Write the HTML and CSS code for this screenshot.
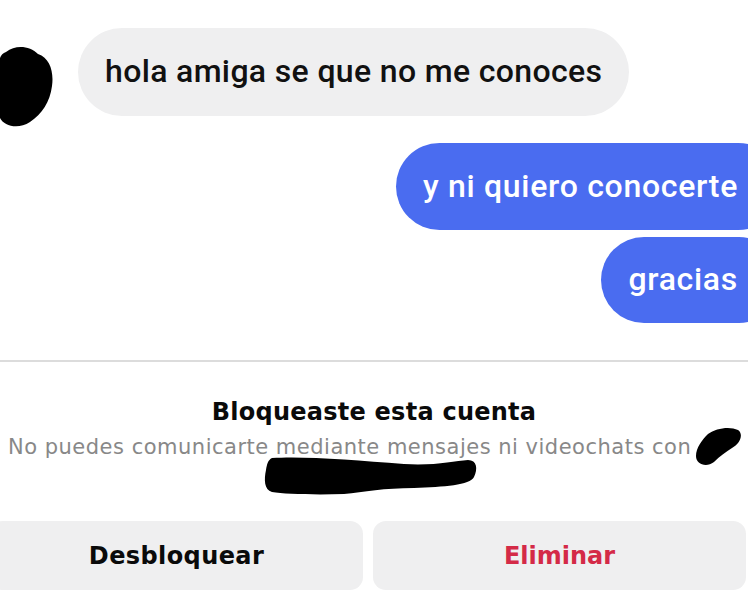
FILE: index.html
```html
<!DOCTYPE html>
<html lang="es">
<head>
<meta charset="utf-8">
<link rel="stylesheet" href="styles.css">
</head>
<body>
<div class="page">
  <div class="chat">
    <div class="row row-in">
      <svg class="blob blob-avatar" width="54" height="84" viewBox="0 0 54 84"><path d="M6 8 C16 0 30 2 38 10 C50 14 54 28 52 42 C50 58 42 70 30 78 C18 86 4 82 0 74 L0 14 C1 11 3 9 6 8 Z" fill="#000"/></svg>
      <div class="bubble bubble-in">hola amiga se que no me conoces</div>
    </div>
    <div class="row row-out">
      <div class="bubble bubble-out">y ni quiero conocerte</div>
    </div>
    <div class="row row-out row-tight">
      <div class="bubble bubble-out">gracias</div>
    </div>
  </div>
  <div class="divider"></div>
  <div class="blocked">
    <div class="blocked-title">Bloqueaste esta cuenta</div>
    <div class="blocked-text">No puedes comunicarte mediante mensajes ni videochats con</div>
    <svg class="blob blob-name" width="48" height="40" viewBox="0 0 48 40"><path d="M14 8 C22 2 36 0 44 4 C50 8 46 18 38 22 C32 26 26 30 20 36 C12 42 2 38 2 30 C2 22 8 14 14 8 Z" fill="#000"/></svg>
    <svg class="blob blob-line" width="214" height="40" viewBox="0 0 214 40"><path d="M8 3 C40 1 90 5 140 9 C170 11 190 6 204 5 C213 5 214 14 210 22 C206 30 180 32 150 33 C120 33 100 37 80 39 C50 40 20 39 8 37 C0 35 0 24 2 15 C3 9 4 5 8 3 Z" fill="#000"/></svg>
  </div>
  <div class="actions">
    <button class="btn btn-unblock">Desbloquear</button>
    <button class="btn btn-delete">Eliminar</button>
  </div>
</div>
</body>
</html>
```
FILE: styles.css
```css
* { box-sizing: border-box; }
html, body {
  margin: 0;
  padding: 0;
  background: #ffffff;
}
body {
  width: 748px;
  height: 610px;
  overflow: hidden;
  font-family: Roboto, "Liberation Sans", Arial, sans-serif;
  -webkit-font-smoothing: antialiased;
}
.page {
  position: relative;
  width: 748px;
  height: 610px;
}
.chat {
  padding-top: 28px;
  display: flex;
  flex-direction: column;
}
.row {
  display: flex;
  position: relative;
}
.row-in {
  padding-left: 78px;
}
.row-out {
  justify-content: flex-end;
  margin-right: -34px;
  margin-top: 27px;
}
.row-tight {
  margin-top: 7px;
}
.bubble {
  height: 88px;
  border-radius: 44px;
  display: flex;
  align-items: center;
  font-size: 32px;
  font-weight: 500;
  white-space: nowrap;
}
.bubble-in {
  background: #efeff0;
  color: #111111;
  padding: 0 27px 2px 27px;
  letter-spacing: 0.35px;
}
.bubble-out {
  background: #4a6cf0;
  color: #ffffff;
  height: 87px;
  padding: 0 44px 2px 27px;
  letter-spacing: 0.7px;
}
.row-tight .bubble-out {
  height: 86px;
}
.blob {
  position: absolute;
  display: block;
}
.blob-avatar {
  left: 0;
  top: 16px;
}
.divider {
  margin-top: 37px;
  height: 2px;
  background: #dcdcdc;
}
.blocked {
  position: relative;
  padding-top: 36px;
  text-align: center;
  height: 159px;
}
.blocked-title {
  font-family: "DejaVu Sans", Verdana, sans-serif;
  font-size: 24px;
  font-weight: 700;
  letter-spacing: 0.25px;
  color: #0a0a0a;
  line-height: 28px;
}
.blocked-text {
  margin-top: 9px;
  font-family: "DejaVu Sans", Verdana, sans-serif;
  font-size: 21px;
  letter-spacing: 0.5px;
  color: #888888;
  line-height: 24px;
  text-align: left;
  padding-left: 8px;
  white-space: nowrap;
}
.blob-name {
  left: 694px;
  top: 64px;
}
.blob-line {
  left: 264px;
  top: 93px;
}
.actions {
  display: grid;
  grid-template-columns: 1fr 1fr;
  gap: 10px;
  margin-left: -10px;
  margin-right: 2px;
}
.btn {
  height: 69px;
  border: none;
  border-radius: 13px;
  background: #efeff0;
  font-family: "DejaVu Sans", Verdana, sans-serif;
  font-size: 24px;
  font-weight: 700;
  padding: 0;
}
.btn-unblock {
  color: #0a0a0a;
  letter-spacing: 0.4px;
}
.btn-delete {
  color: #d42a47;
}
```
